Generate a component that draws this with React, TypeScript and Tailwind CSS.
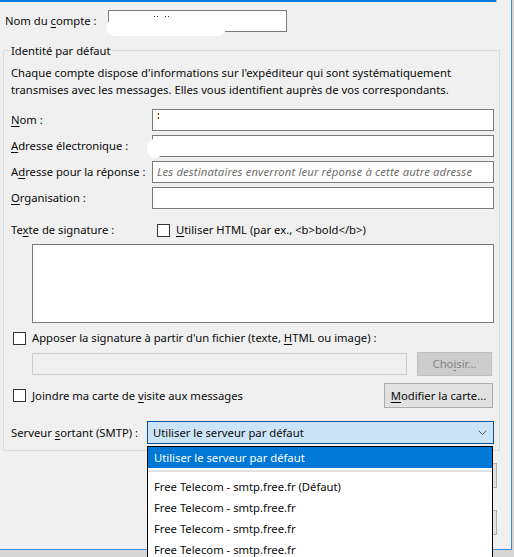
import React from "react";

const font = { fontFamily: '"Noto Sans", "Open Sans", sans-serif' };

function U({ children }: { children: React.ReactNode }) {
  return <span className="underline underline-offset-[2px] decoration-[1px]">{children}</span>;
}

function Check() {
  return <span className="block w-[13px] h-[13px] shrink-0 bg-white border border-[#333333]" />;
}

function Field({ label, children }: { label: React.ReactNode; children?: React.ReactNode }) {
  return (
    <div className="flex items-center h-[22px]">
      <div className="w-[141px] shrink-0">{label}</div>
      <div className="relative flex-1 h-[22px] bg-white border border-[#7a7a7a] flex items-center px-[4px]">
        {children}
      </div>
    </div>
  );
}

export default function App() {
  return (
    <div className="w-[514px] h-[557px] bg-[#d6d6d6] overflow-hidden text-[11.25px] text-[#0a0a0a] leading-none" style={font}>
      <div className="relative w-[512px] h-[550px] bg-[#f0f0f0] border-r border-b border-[#3a87d4] flex flex-col">
        {/* focused element above */}
        <div className="h-[2px] w-[497px] bg-[#0078d7] border-r border-[#c8c8c8]" />

        {/* account name */}
        <div className="flex items-center mt-[8px] h-[22px] pl-[5px]">
          <div className="w-[103px] shrink-0">
            Nom du <U>c</U>ompte :
          </div>
          <div className="relative w-[179px] h-[22px] bg-white border border-[#7a7a7a]">
            <span className="absolute left-[45px] top-[5px] w-[1px] h-[1px] bg-[#552222]" />
            <span className="absolute left-[48px] top-[5px] w-[1px] h-[1px] bg-[#333355]" />
            <span className="absolute left-[56px] top-[5px] w-[1px] h-[1px] bg-[#662222]" />
            <span className="absolute left-[59px] top-[5px] w-[1px] h-[1px] bg-[#223366]" />
            <span className="absolute left-[-3px] top-[9px] w-[120px] h-[16px] bg-white rounded-[10px]" />
          </div>
        </div>

        {/* default identity group */}
        <div className="relative mt-[18px] ml-[3px] w-[497px] border border-[#dcdcdc] pl-[7px] pr-[5px] pt-[13px] pb-[6px] flex flex-col">
          <span className="absolute left-[6px] top-[-8px] bg-[#f0f0f0] px-[1px] leading-[16px]">Identité par défaut</span>

          <p className="leading-[17px]">
            Chaque compte dispose d'informations sur l'expéditeur qui sont systématiquement
            <br />
            transmises avec les messages. Elles vous identifient auprès de vos correspondants.
          </p>

          <div className="mt-[11px] flex flex-col gap-[4px]">
            <Field label={<><U>N</U>om :</>}>
              <span className="absolute left-[5px] top-[3px] w-[1px] h-[2px] bg-[#8a1c1c]" />
              <span className="absolute left-[5px] top-[7px] w-[1px] h-[2px] bg-[#8a1c1c]" />
              <span className="absolute left-[4px] top-[3px] w-[1px] h-[7px] bg-[#f3e7a0]" />
            </Field>
            <Field label={<><U>A</U>dresse électronique :</>}>
              <span className="absolute left-[-6px] top-[3px] w-[16px] h-[19px] bg-white rounded-full" />
            </Field>
            <Field label={<>A<U>d</U>resse pour la réponse :</>}>
              <span className="italic text-[#6d6d6d] whitespace-nowrap tracking-[0.15px]">
                Les destinataires enverront leur réponse à cette autre adresse
              </span>
            </Field>
            <Field label={<><U>O</U>rganisation :</>} />
          </div>

          {/* signature */}
          <div className="mt-[10px] h-[22px] flex items-center">
            <div className="w-[146px] shrink-0">
              Te<U>x</U>te de signature :
            </div>
            <Check />
            <span className="ml-[6px]">
              <U>U</U>tiliser HTML (par ex., &lt;b&gt;bold&lt;/b&gt;)
            </span>
          </div>
          <div className="mt-[3px] ml-[21px] h-[79px] bg-white border border-[#7a7a7a]" />

          <div className="mt-[7px] h-[16px] flex items-center pl-[2px]">
            <Check />
            <span className="ml-[6px]">
              Apposer la signature à partir d'un fichier (texte, <U>H</U>TML ou image) :
            </span>
          </div>

          <div className="mt-[6px] h-[24px] flex items-center pl-[21px]">
            <div className="w-[375px] h-[22px] bg-[#f0f0f0] border border-[#cccccc]" />
            <button className="ml-[10px] w-[75px] h-[24px] bg-[#cccccc] border border-[#bfbfbf] text-[#838383] flex items-center justify-center">
              Cho<U>i</U>sir...
            </button>
          </div>

          <div className="mt-[7px] h-[25px] flex items-center pl-[2px]">
            <Check />
            <span className="ml-[6px]">
              Joindre ma carte de <U>v</U>isite aux messages
            </span>
            <button className="ml-auto mr-[1px] w-[109px] h-[25px] bg-[#e1e1e1] border border-[#adadad] flex items-center justify-center">
              <U>M</U>odifier la carte...
            </button>
          </div>

          <div className="mt-[13px] h-[23px] flex items-center">
            <div className="w-[136px] shrink-0">
              Serveur <U>s</U>ortant (SMTP) :
            </div>
            <div className="flex-1 h-[23px] bg-[#cce4f7] border border-[#005499] flex items-center pl-[5px] pr-[6px]">
              <span>Utiliser le serveur par défaut</span>
              <svg className="ml-auto" width="9" height="5" viewBox="0 0 9 5">
                <polyline points="0.5,0.5 4.5,4.5 8.5,0.5" fill="none" stroke="#5a5a5a" strokeWidth="1" />
              </svg>
            </div>
          </div>
        </div>

        {/* dialog buttons, partly covered by the open list */}
        <div className="mt-[12px] flex flex-col items-end gap-[22px] pr-[14px]">
          <button className="w-[200px] h-[25px] bg-[#e1e1e1] border border-[#adadad]">Gérer les identités...</button>
          <button className="w-[200px] h-[25px] bg-[#e1e1e1] border border-[#adadad]">Modifier le serveur SMTP...</button>
        </div>

        {/* open combo list */}
        <div className="absolute left-[147px] top-[446px] w-[346px] h-[130px] bg-white border-x border-t border-black">
          <div className="h-[21px] bg-[#0078d7] text-white flex items-center pl-[6px]">
            Utiliser le serveur par défaut
          </div>
          <div className="mt-[2px] h-[2px] bg-[#e0e0e0]" />
          <div className="mt-[4px] flex flex-col">
            <div className="h-[21px] flex items-center pl-[6px]">Free Telecom - smtp.free.fr (Défaut)</div>
            <div className="h-[21px] flex items-center pl-[6px]">Free Telecom - smtp.free.fr</div>
            <div className="h-[21px] flex items-center pl-[6px]">Free Telecom - smtp.free.fr</div>
            <div className="h-[21px] flex items-center pl-[6px]">Free Telecom - smtp.free.fr</div>
          </div>
        </div>
      </div>
    </div>
  );
}
